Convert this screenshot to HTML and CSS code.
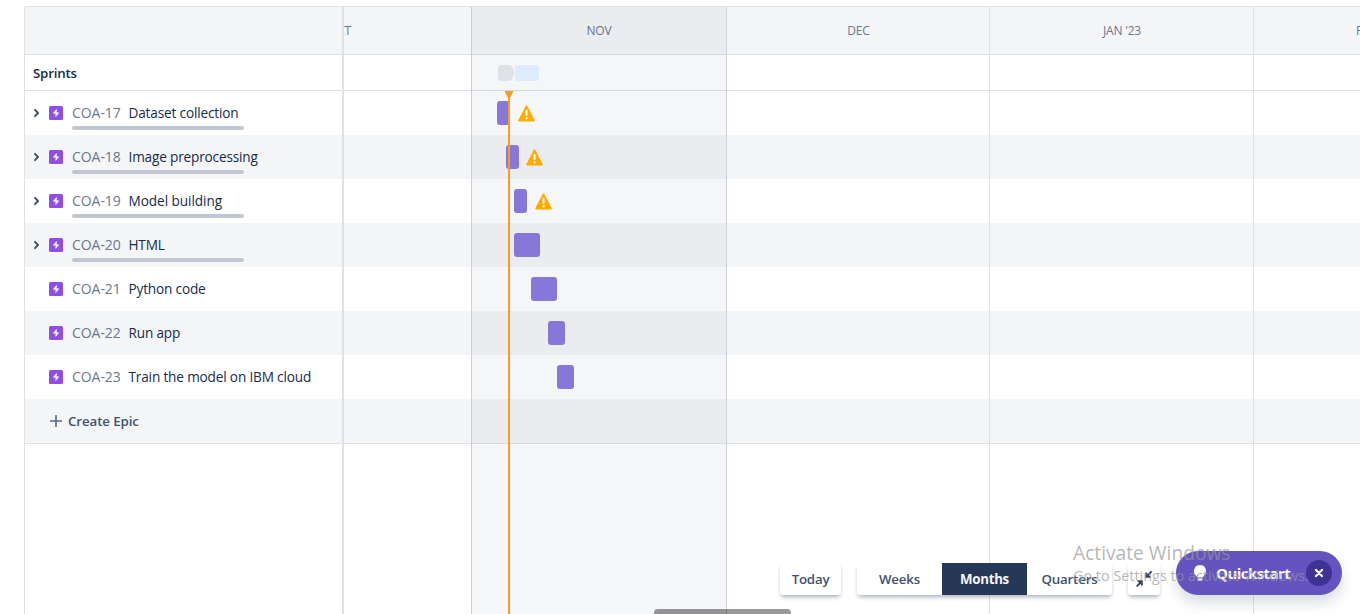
FILE: index.html
```html
<!DOCTYPE html>
<html lang="en">
<head>
<meta charset="utf-8">
<title>Roadmap</title>
<link rel="stylesheet" href="styles.css">
</head>
<body>
<svg width="0" height="0" class="defs" aria-hidden="true">
  <symbol id="epic" viewBox="0 0 14 14"><rect width="14" height="14" rx="1.5" fill="#904ee2"/><path d="M7.700 2.800 3.800 7.500h2.700v3.800L10.300 6.500H7.700z" fill="#fff"/></symbol>
  <symbol id="chevron" viewBox="0 0 8 10"><path d="M2 1.900 5 5 2 8.100" fill="none" stroke="#42526e" stroke-width="2" stroke-linecap="round" stroke-linejoin="round"/></symbol>
  <symbol id="warn" viewBox="0 0 17 17"><path d="M8.500 1.200 16 15.600H1z" fill="#ffab00" stroke="#ffab00" stroke-width="1.600" stroke-linejoin="round"/><path d="M7.600 5h1.900v5.800H7.600zM7.600 12.200h1.900v2H7.600z" fill="#fff"/></symbol>
</svg>
<div class="page">
  <div class="roadmap">
    <div class="sidebar">
      <div class="head"></div>
      <div class="sprints"><span class="sprints-label">Sprints</span></div>
      <div class="epic"><svg class="chev"><use href="#chevron"/></svg><svg class="type"><use href="#epic"/></svg><div class="info"><span class="key">COA-17</span><span class="name">Dataset collection</span><i class="progress"></i></div></div>
      <div class="epic alt"><svg class="chev"><use href="#chevron"/></svg><svg class="type"><use href="#epic"/></svg><div class="info"><span class="key">COA-18</span><span class="name">Image preprocessing</span><i class="progress"></i></div></div>
      <div class="epic"><svg class="chev"><use href="#chevron"/></svg><svg class="type"><use href="#epic"/></svg><div class="info"><span class="key">COA-19</span><span class="name roomy">Model building</span><i class="progress"></i></div></div>
      <div class="epic alt"><svg class="chev"><use href="#chevron"/></svg><svg class="type"><use href="#epic"/></svg><div class="info"><span class="key">COA-20</span><span class="name">HTML</span><i class="progress"></i></div></div>
      <div class="epic"><span class="chev"></span><svg class="type"><use href="#epic"/></svg><div class="info"><span class="key">COA-21</span><span class="name">Python code</span></div></div>
      <div class="epic alt"><span class="chev"></span><svg class="type"><use href="#epic"/></svg><div class="info"><span class="key">COA-22</span><span class="name">Run app</span></div></div>
      <div class="epic"><span class="chev"></span><svg class="type"><use href="#epic"/></svg><div class="info"><span class="key">COA-23</span><span class="name">Train the model on IBM cloud</span></div></div>
      <div class="create alt"><svg width="12" height="12" viewBox="0 0 12 12"><path d="M6 .5v11M.5 6h11" stroke="#5a6b84" stroke-width="1.600" stroke-linecap="round"/></svg><span>Create Epic</span></div>
    </div>
    <div class="timeline">
      <div class="head months">
        <div class="month oct"><span>OCT</span></div>
        <div class="month nov"><span>NOV</span></div>
        <div class="month dec"><span>DEC</span></div>
        <div class="month jan"><span>JAN '23</span></div>
        <div class="month feb"><span>FEB</span></div>
      </div>
      <div class="sprints"></div>
      <div class="lane"></div><div class="lane alt"></div><div class="lane"></div><div class="lane alt"></div>
      <div class="lane"></div><div class="lane alt"></div><div class="lane"></div><div class="lane alt last"></div>
      <div class="columns"><div class="oct"></div><div class="nov"></div><div class="dec"></div><div class="jan"></div></div>
      <div class="bars">
        <div class="chips"><svg width="16" height="16" viewBox="0 0 16 16"><path d="M3 0H11.500Q13 0 13.800 1.400L16 6.500V9.500L13.800 14.600Q13 16 11.500 16H3Q0 16 0 13V3Q0 0 3 0z" fill="#dfe1e6"/></svg><i></i></div>
        <div class="track"><i class="bar" style="margin-left:153px;width:13px"></i><svg class="warn"><use href="#warn"/></svg></div>
        <div class="track"><i class="bar" style="margin-left:162px;width:13px"></i><svg class="warn near"><use href="#warn"/></svg></div>
        <div class="track"><i class="bar" style="margin-left:170px;width:13px"></i><svg class="warn"><use href="#warn"/></svg></div>
        <div class="track"><i class="bar" style="margin-left:170px;width:26px"></i></div>
        <div class="track"><i class="bar" style="margin-left:187px;width:26px"></i></div>
        <div class="track"><i class="bar" style="margin-left:204px;width:17px"></i></div>
        <div class="track"><i class="bar" style="margin-left:213px;width:17px"></i></div>
      </div>
      <div class="today"></div>
    </div>
  </div>
  <div class="scroll"></div>
  <div class="controls">
    <div class="btn today-btn"><span>Today</span></div>
    <div class="group"><div class="weeks"><span>Weeks</span></div><div class="on"><span>Months</span></div><div class="quarters"><span>Quarters</span></div></div>
    <div class="btn shrink"><svg width="16" height="16" viewBox="0 0 16 16" fill="none" stroke="#344563" stroke-width="1.900" stroke-linecap="round"><path d="M15 1 11 5M1.200 14.800 5.400 10.600"/><path d="M10 1.200V6H14.800zM1.200 10H6V14.800z" fill="#344563" stroke="none"/><path d="M10 2v4h4M2 10h4v4" stroke-width="1.500"/></svg></div>
    <div class="quick">
      <svg width="14" height="18" viewBox="0 0 14 18"><path d="M7 1a6.100 6.100 0 0 0-3.700 10.900c.6.500.7 1.100.7 1.600h6c0-.5.1-1.100.7-1.600A6.100 6.100 0 0 0 7 1zM4.500 14.500h5v1q0 1.500-1.500 1.500H6q-1.500 0-1.500-1.500z" fill="#fff"/></svg>
      <span class="quick-label">Quickstart</span>
      <div class="close"><svg width="10" height="10" viewBox="0 0 10 10"><path d="M2 2 8 8M8 2 2 8" stroke="#fff" stroke-width="2.300" stroke-linecap="round"/></svg></div>
    </div>
  </div>
  <div class="watermark"><span class="wm1">Activate Windows</span><span class="wm2">Go to Settings to activate Windows.</span></div>
</div>
</body>
</html>
```

FILE: styles.css
```css
* { box-sizing: border-box; }
html, body { margin: 0; height: 614px; overflow: hidden; }
body { background: #fff; color: #172b4d; font: 13.3px/20px "Open Sans", "Noto Sans", sans-serif; }
.defs { position: absolute; }
.page { position: relative; width: 1360px; height: 614px; padding: 6px 0 0 24px; overflow: hidden; }
.roadmap { display: flex; height: 608px; border: 1px solid #dfe1e6; border-right: 0; border-bottom: 0; border-top-left-radius: 3px; overflow: hidden; }
.sidebar { flex: none; width: 319px; border-right: 2px solid #dfe1e6; }
.timeline { position: relative; flex: 1; overflow: hidden; }
.head { height: 48px; background: #f4f5f7; border-bottom: 1px solid #dfe1e6; }
.sprints { display: flex; align-items: center; height: 36px; padding-left: 8px; border-bottom: 1px solid #dfe1e6; }
.sprints-label { font-weight: 600; letter-spacing: -0.2px; }
.epic { display: flex; align-items: center; height: 44px; padding-left: 8px; }
.alt { background: #f4f5f7; }
.chev { width: 8px; height: 10px; margin-right: 8px; }
.type { width: 14px; height: 14px; margin-right: 9px; }
.info { position: relative; display: flex; width: 240px; white-space: nowrap; }
.key { width: 56.5px; color: #6b778c; font-size: 14px; letter-spacing: -0.05px; }
.name { font-size: 13.6px; letter-spacing: -0.16px; }
.roomy { letter-spacing: -0.05px; }
.progress { position: absolute; left: 0; top: 23px; width: 172px; height: 4px; border-radius: 2px; background: #c1c7d0; }
.create { display: flex; align-items: center; gap: 6px; height: 45px; padding-left: 25px; border-bottom: 1px solid #dfe1e6; color: #42526e; font-weight: 600; letter-spacing: -0.1px; }
.months { display: flex; }
.month { display: flex; align-items: center; justify-content: center; flex: none; font-size: 12px; letter-spacing: -0.2px; color: #6b778c; }
.oct { width: 127px; }
.nov { width: 256px; }
.dec { width: 263px; }
.jan { width: 264px; }
.month.oct { justify-content: flex-end; padding-right: 120px; }
.feb { width: 224px; }
.lane { height: 44px; }
.lane.last { height: 45px; border-bottom: 1px solid #dfe1e6; }
.columns { position: absolute; inset: 0; display: flex; }
.columns div { flex: none; border-right: 1px solid #dfe1e6; }
.columns .oct { border-right: 0; }
.columns .nov { border-left: 1px solid #c9ced9; border-right-color: #cdd1da; background: rgba(9, 30, 66, 0.04); }
.bars { position: absolute; inset: 48px 0 0; }
.chips { display: flex; gap: 1px; align-items: center; height: 36px; padding-left: 154px; }
.chips i { width: 24px; height: 16px; border-radius: 3px; background: #deebff; }
.track { display: flex; align-items: center; height: 44px; }
.bar { height: 24px; border-radius: 3px; background: #8777d9; }
.warn { width: 17px; height: 17px; margin-left: 7.5px; }
.warn.near { margin-left: 6.5px; }
.today { position: absolute; left: 164px; top: 84px; bottom: 0; width: 2px; background: #ff991f; }
.today::before { content: ""; position: absolute; left: -3px; top: 0; width: 8px; height: 7px; background: #ff991f; clip-path: polygon(0 0, 100% 0, 100% 15%, 62% 100%, 38% 100%, 0 15%); }
.scroll { position: absolute; left: 654px; top: 609px; width: 137px; height: 10px; border-radius: 4px; background: rgba(0, 0, 0, 0.4); }
.controls { position: absolute; right: 18px; bottom: 19px; display: flex; align-items: flex-end; color: #42526e; font-weight: 600; letter-spacing: -0.2px; }
.btn, .group { display: flex; align-items: center; justify-content: center; height: 32px; margin-right: 16px; border-radius: 3px; background: #fff; box-shadow: 0 3px 4px -1px rgba(9, 30, 66, 0.35); }
.today-btn { width: 61px; }
.group { width: 255px; }
.group div { display: flex; align-items: center; justify-content: center; height: 32px; width: 85px; }
.group .on { background: #253858; color: #f4f5f7; font-weight: 700; letter-spacing: -0.3px; }
.shrink { width: 32px; }
.quick { display: flex; align-items: center; width: 166px; height: 44px; padding-left: 17px; border-radius: 22px; background: #6554c0; color: #fff; box-shadow: 0 8px 14px rgba(9, 30, 66, 0.15); }
.quick-label { width: 75px; margin: 0 15px 0 9px; font-size: 15px; font-weight: 700; letter-spacing: -0.55px; white-space: nowrap; }
.close { display: flex; align-items: center; justify-content: center; width: 26px; height: 26px; border-radius: 50%; background: #403294; }
.watermark { position: absolute; left: 1073px; top: 540px; display: flex; flex-direction: column; color: rgba(150, 150, 150, 0.7); white-space: nowrap; }
.wm1 { font-size: 19.2px; line-height: 26px; }
.wm2 { font-size: 14.4px; line-height: 20px; }
```
